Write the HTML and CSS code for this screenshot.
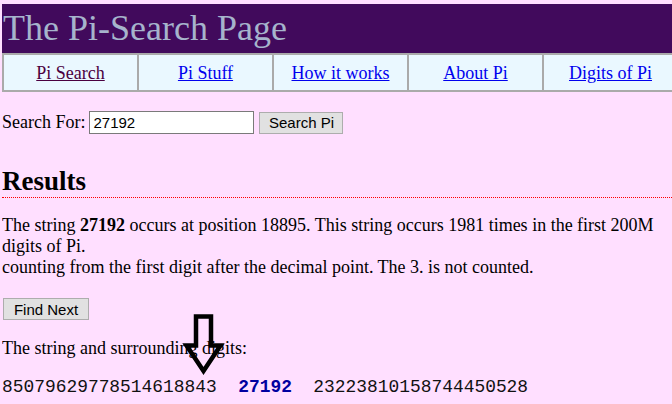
FILE: index.html
```html
<!DOCTYPE html>
<html>
<head>
<meta charset="utf-8">
<title>The Pi-Search Page</title>
<link rel="stylesheet" href="styles.css">
</head>
<body>
<header class="banner"><h1 class="title">The Pi-Search Page</h1></header>
<nav class="tabs">
  <div class="tab"><a class="visited" href="#">Pi Search</a></div>
  <div class="tab"><a href="#">Pi Stuff</a></div>
  <div class="tab"><a href="#">How it works</a></div>
  <div class="tab"><a href="#">About Pi</a></div>
  <div class="tab"><a href="#">Digits of Pi</a></div>
</nav>
<form class="search">
  <label class="search-label" for="q">Search For:</label>
  <input class="search-input" id="q" type="text" value="27192">
  <button class="btn" type="button">Search Pi</button>
</form>
<h2 class="results">Results</h2>
<p class="text">The string <b>27192</b> occurs at position 18895. This string occurs 1981 times in the first 200M digits of Pi.<br>counting from the first digit after the decimal point. The 3. is not counted.</p>
<button class="btn next" type="button">Find Next</button>
<p class="text">The string and surrounding digits:</p>
<p class="digits">85079629778514618843&nbsp; <b class="hit">27192</b> &nbsp;23223810158744450528</p>
<svg class="arrow" width="46" height="70" viewBox="0 0 46 70">
  <polygon points="15,5.5 30,5.5 30,34.5 39.5,34.5 22.5,60 5.5,34.5 15,34.5" fill="none" stroke="#000" stroke-width="4.5" stroke-linejoin="miter"/>
</svg>
</body>
</html>
```
FILE: styles.css
```css
html {
  overflow: hidden;
  background: #ffdfff;
}
body {
  margin: 4px 0 0 2px;
  font-family: "Liberation Serif", "Times New Roman", serif;
  font-size: 18px;
  color: #000;
  background: #ffdfff;
  overflow: hidden;
}
.banner {
  background: #410a5c;
  height: 49px;
}
.title {
  margin: 0;
  font-size: 36px;
  font-weight: normal;
  line-height: 49px;
  color: #a6b4cc;
  padding-left: 1px;
  white-space: nowrap;
}
.tabs {
  display: flex;
  width: 680px;
  height: 35px;
  border-top: 2px solid #aaaaaa;
  border-bottom: 2px solid #aaaaaa;
  background: #eaf8ff;
}
.tab {
  box-sizing: border-box;
  flex: 0 0 135px;
  border-left: 2px solid #aaaaaa;
  display: flex;
  align-items: center;
  justify-content: center;
  padding-top: 2px;
}
.tab a {
  color: #0000ee;
  text-decoration: underline;
}
.tab a.visited {
  color: #4a0040;
}
.search {
  display: flex;
  align-items: center;
  margin: 19px 0 0 0;
  height: 23px;
}
.search-label {
  margin-right: 4px;
}
.search-input {
  box-sizing: border-box;
  width: 165px;
  height: 23px;
  border: 1px solid #7a7a7a;
  padding: 0 3px;
  font-family: "Liberation Sans", Arial, sans-serif;
  font-size: 15px;
  background: #fff;
  color: #000;
  margin: 0 5px 0 0;
}
.btn {
  box-sizing: border-box;
  height: 22px;
  padding: 0 10px;
  border: 1px solid #adadad;
  background: #e1e1e1;
  font-family: "Liberation Sans", Arial, sans-serif;
  font-size: 15px;
  color: #000;
  border-radius: 0;
}
.search .btn {
  width: 84px;
  padding: 0;
}
.results {
  margin: 32px 0 0 0;
  font-size: 27px;
  font-weight: bold;
  line-height: 31px;
  border-bottom: 1px dotted #ff0000;
}
.text {
  margin: 17px 0 0 0;
  line-height: 21px;
}
.next {
  display: block;
  width: 86px;
  padding: 0;
  margin: 20px 0 0 1px;
}
.next + .text {
  margin-top: 18px;
}
.digits {
  margin: 18px 0 0 0;
  font-family: "Liberation Mono", "Courier New", monospace;
  font-size: 17.9px;
  line-height: 20px;
  white-space: nowrap;
  color: #111;
}
.hit {
  color: #0000a0;
  font-weight: bold;
}
.arrow {
  position: absolute;
  left: 181px;
  top: 311px;
}
```
